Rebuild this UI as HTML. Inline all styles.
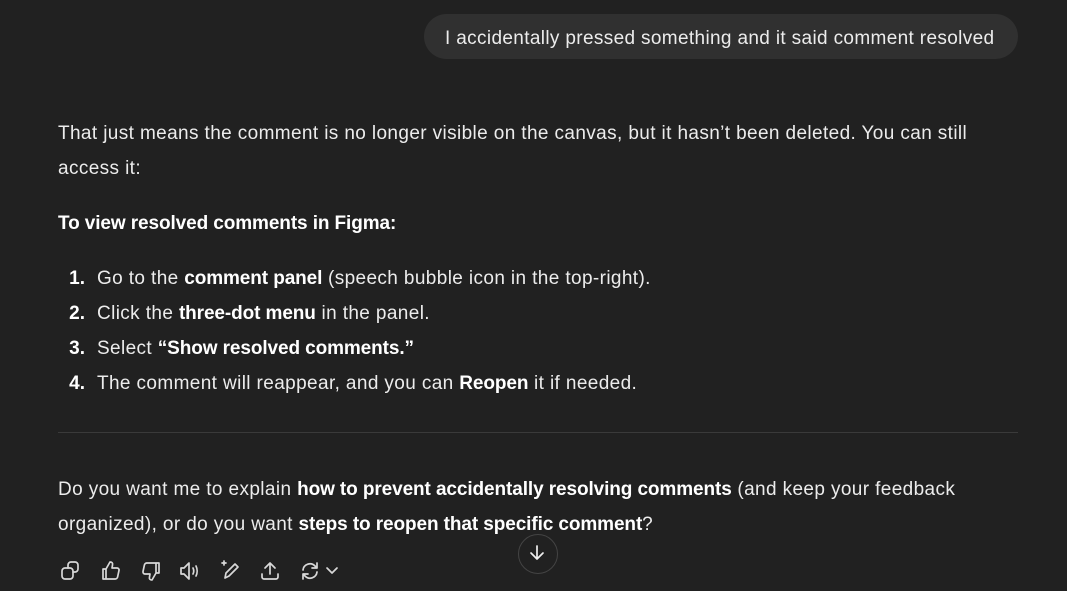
<!DOCTYPE html>
<html><head><meta charset="utf-8"><style>
body{margin:0;width:1067px;height:591px;background:#212121;color:#ececec;font-family:"Liberation Sans",sans-serif;font-size:19px;letter-spacing:0.38px;overflow:hidden;position:relative}
.l{position:absolute;white-space:nowrap;line-height:24px;margin-top:2px}
b{font-weight:bold;color:#fff;letter-spacing:-0.1px}
.bub{position:absolute;left:424px;top:14px;width:594px;height:45px;background:#303030;border-radius:23px}
.bub span{position:absolute;left:21px;top:14px;font-size:19px;white-space:nowrap;letter-spacing:0.35px}
.num{position:absolute;font-weight:bold;color:#fff;width:28px;text-align:right;left:57px;letter-spacing:0;margin-top:2px}
hr{position:absolute;left:58px;top:432px;width:960px;margin:0;border:0;border-top:1px solid #3a3a3a}
svg{position:absolute;stroke:#d8d8d8;fill:none;stroke-width:1.7;stroke-linecap:round;stroke-linejoin:round}
.down{position:absolute;left:518px;top:534px;width:38px;height:38px;border:1px solid #444;border-radius:50%;background:#212121}
</style></head><body>
<div class="bub"><span>I accidentally pressed something and it said comment resolved</span></div>
<div class="l" style="left:58px;top:120px">That just means the comment is no longer visible on the canvas, but it hasn’t been deleted. You can still</div>
<div class="l" style="left:58px;top:155px">access it:</div>
<div class="l" style="left:58px;top:210px"><b>To view resolved comments in Figma:</b></div>
<div class="num" style="top:265px;line-height:24px">1.</div><div class="l" style="left:97px;top:265px">Go to the <b>comment panel</b> (speech bubble icon in the top-right).</div>
<div class="num" style="top:300px;line-height:24px">2.</div><div class="l" style="left:97px;top:300px">Click the <b>three-dot menu</b> in the panel.</div>
<div class="num" style="top:335px;line-height:24px">3.</div><div class="l" style="left:97px;top:335px">Select <b>“Show resolved comments.”</b></div>
<div class="num" style="top:370px;line-height:24px">4.</div><div class="l" style="left:97px;top:370px">The comment will reappear, and you can <b>Reopen</b> it if needed.</div>
<hr>
<div class="l" style="left:58px;top:476px">Do you want me to explain <b>how to prevent accidentally resolving comments</b> (and keep your feedback</div>
<div class="l" style="left:58px;top:511px">organized), or do you want <b>steps to reopen that specific comment</b>?</div>
<div class="down"></div>
<svg style="left:527px;top:543px" width="20" height="20" viewBox="0 0 20 20"><path d="M10 3v13M4 10l6 6 6-6" stroke="#eee"/></svg>
<svg style="left:60px;top:560px" width="22" height="22" viewBox="0 0 22 22"><rect x="2" y="8" width="11" height="11" rx="3"/><path d="M8 8V5a3 3 0 0 1 3-3h4a3 3 0 0 1 3 3v4a3 3 0 0 1-3 3h-2"/></svg>
<svg style="left:100px;top:560px" width="22" height="22" viewBox="0 0 22 22"><path d="M6 9v10H3V9zM6 9l4-7c2 0 3 1 2.5 3L12 8h5a2 2 0 0 1 2 2.4l-1.4 6.6A2.5 2.5 0 0 1 15 19H6"/></svg>
<svg style="left:140px;top:560px" width="22" height="22" viewBox="0 0 22 22"><path d="M16 13V3h3v10zM16 13l-4 7c-2 0-3-1-2.5-3L10 14H5a2 2 0 0 1-2-2.4L4.4 5A2.5 2.5 0 0 1 7 3h9"/></svg>
<svg style="left:178px;top:560px" width="24" height="22" viewBox="0 0 24 22"><path d="M3 8h3l5-5v16l-5-5H3z"/><path d="M15 8c1 2 1 4 0 6M18 6c1.5 3 1.5 7 0 10"/></svg>
<svg style="left:219px;top:558px" width="24" height="24" viewBox="0 0 24 24"><path d="M6 20l1-5L16 6l3 3-9 9z"/><path d="M5 3v4M3 5h4"/></svg>
<svg style="left:259px;top:560px" width="22" height="22" viewBox="0 0 22 22"><path d="M11 14V3M6 8l5-5 5 5M3 14v3a2 2 0 0 0 2 2h12a2 2 0 0 0 2-2v-3"/></svg>
<svg style="left:299px;top:560px" width="22" height="22" viewBox="0 0 22 22"><path d="M4 10a7 7 0 0 1 12-4l2 2M18 3v5h-5M18 12a7 7 0 0 1-12 4l-2-2M4 19v-5h5"/></svg>
<svg style="left:325px;top:564px" width="14" height="12" viewBox="0 0 14 12"><path d="M2 4l5 5 5-5"/></svg>
</body></html>
